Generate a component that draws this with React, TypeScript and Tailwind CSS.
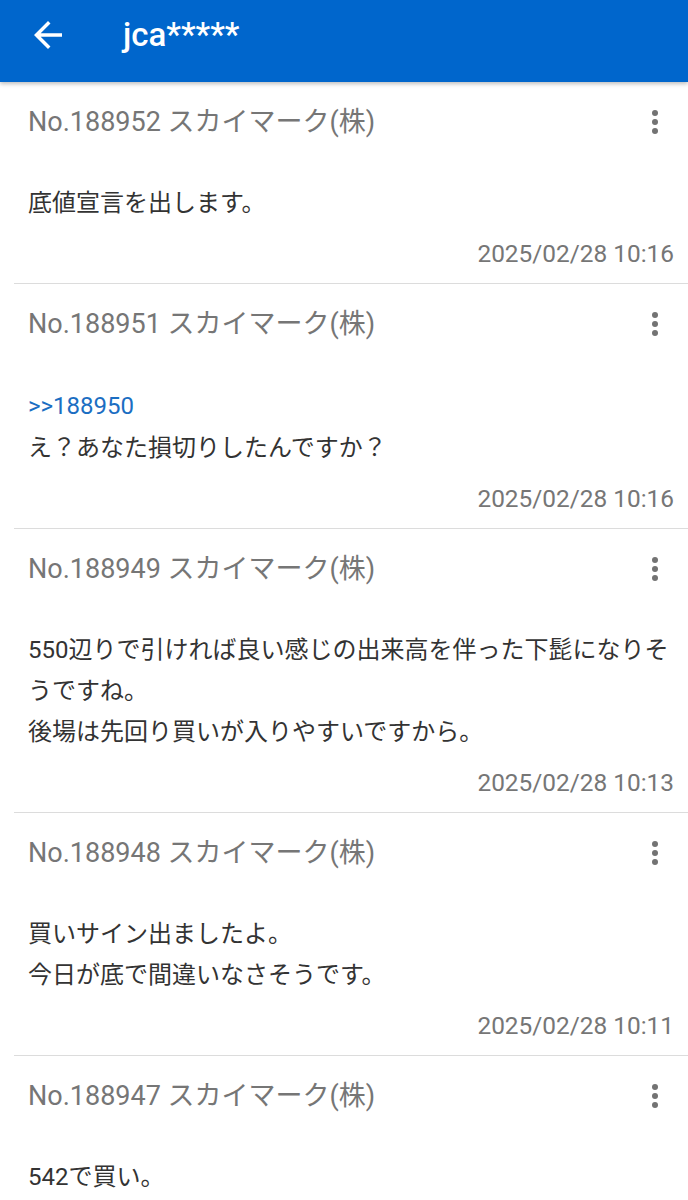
import React from "react"

interface Post {
  no: number
  reply?: number
  lines: string[]
  date?: string
}

const posts: Post[] = [
  { no: 188952, lines: ["底値宣言を出します。"], date: "2025/02/28 10:16" },
  { no: 188951, reply: 188950, lines: ["え？あなた損切りしたんですか？"], date: "2025/02/28 10:16" },
  {
    no: 188949,
    lines: ["550辺りで引ければ良い感じの出来高を伴った下髭になりそうですね。", "後場は先回り買いが入りやすいですから。"],
    date: "2025/02/28 10:13",
  },
  { no: 188948, lines: ["買いサイン出ましたよ。", "今日が底で間違いなさそうです。"], date: "2025/02/28 10:11" },
  // last one runs past the bottom of the screen, date not visible
  { no: 188947, lines: ["542で買い。"] },
]

function MoreIcon() {
  return (
    <svg width="36" height="36" viewBox="0 0 24 24" className="mr-[1px] shrink-0" fill="#737373">
      <circle cx="12" cy="6" r="2" />
      <circle cx="12" cy="12" r="2" />
      <circle cx="12" cy="18" r="2" />
    </svg>
  )
}

function PostItem({ post }: { post: Post }) {
  return (
    <div className="ml-[14px] border-b border-[#dcdcdc] pl-[14px] pr-[14px] pb-[14px]">
      {/* Header row */}
      <div className="flex h-[80px] items-center justify-between">
        <span className="text-[27px] text-[#767676]">No.{post.no} スカイマーク(株)</span>
        <MoreIcon />
      </div>

      {/* Body */}
      <div className="pt-[21px] text-[24px] leading-[41px] text-[#333333]">
        {post.reply && <div className="leading-[43px] text-[#1b6ec2]">&gt;&gt;{post.reply}</div>}
        {post.lines.map((line, i) => (
          <div key={i}>{line}</div>
        ))}
      </div>

      {/* Date */}
      {post.date && (
        <div className="mt-[15px] h-[30px] text-right text-[24.4px] leading-[30px] text-[#767676]">{post.date}</div>
      )}
    </div>
  )
}

export default function App() {
  return (
    <div
      className="min-h-screen w-[688px] bg-white"
      style={{ fontFamily: 'Roboto, "Noto Sans CJK JP", sans-serif' }}
    >
      <header className="relative z-10 flex h-[82px] items-center bg-[#0066cc] shadow-[0_2px_4px_rgba(0,0,0,0.25)]">
        <svg width="42" height="42" viewBox="0 0 24 24" className="ml-[27px] -mt-[12px]" fill="#ffffff">
          <path d="M20 11H7.83l5.59-5.59L12 4l-8 8 8 8 1.41-1.41L7.83 13H20v-2z" />
        </svg>
        <h1 className="ml-[54px] -mt-[12px] text-[33px] font-medium text-white">jca*****</h1>
      </header>

      <main>
        {posts.map((post) => (
          <PostItem key={post.no} post={post} />
        ))}
      </main>
    </div>
  )
}
